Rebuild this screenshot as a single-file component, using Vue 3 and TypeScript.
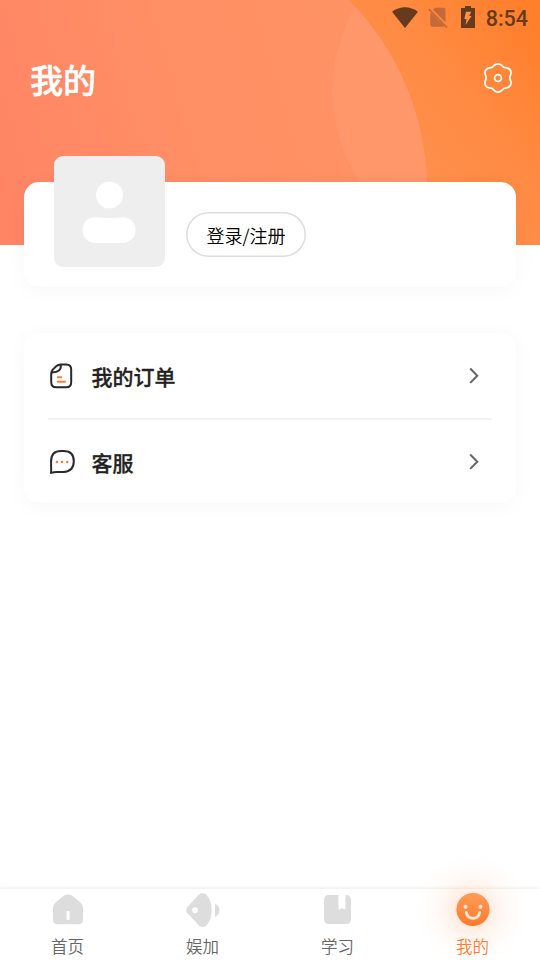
<script setup lang="ts">
interface Entry {
  id: string
  label: string
}

const entries: Entry[] = [
  { id: 'orders', label: '我的订单' },
  { id: 'service', label: '客服' },
]

const tabs: Entry[] = [
  { id: 'home', label: '首页' },
  { id: 'play', label: '娱加' },
  { id: 'study', label: '学习' },
  { id: 'mine', label: '我的' },
]

const active = 'mine'
</script>

<template>
  <div class="screen">
    <header class="hero">
      <svg class="hero-art" width="540" height="245" viewBox="0 0 540 245">
        <defs>
          <linearGradient id="base" gradientUnits="userSpaceOnUse" x1="540" y1="30" x2="390" y2="150">
            <stop offset="0" stop-color="#ff7f2b" />
            <stop offset="0.5" stop-color="#ff8a42" />
            <stop offset="1" stop-color="#ff904e" />
          </linearGradient>
          <linearGradient id="disc" gradientUnits="userSpaceOnUse" x1="0" y1="190" x2="400" y2="70">
            <stop offset="0" stop-color="#ff8565" />
            <stop offset="0.5" stop-color="#ff8f65" />
            <stop offset="1" stop-color="#ff9363" />
          </linearGradient>
          <linearGradient id="veil" gradientUnits="userSpaceOnUse" x1="333" y1="0" x2="430" y2="0">
            <stop offset="0" stop-color="#fff" stop-opacity="0.05" />
            <stop offset="1" stop-color="#fff" stop-opacity="0.04" />
          </linearGradient>
          <clipPath id="lens"><circle cx="157.6" cy="190" r="269.500" /></clipPath>
        </defs>
        <rect width="540" height="245" fill="url(#base)" />
        <circle cx="157.6" cy="190" r="269.500" fill="url(#disc)" />
        <circle cx="498.5" cy="91" r="166" fill="url(#veil)" clip-path="url(#lens)" />
      </svg>
      <div class="status">
        <svg class="wifi" width="26" height="21" viewBox="0 0 26 21">
          <path d="M0 4.7C7.5-1.3 18.500-1.300 26 4.700L13 21Z" fill="#663a1c" />
        </svg>
        <svg class="sim" width="20" height="21" viewBox="0 0 20 21">
          <path d="M7 .8H15.500Q17.500.8 17.500 2.800V15.200L5.100 2.700ZM2.300 5.200L16.800 19.600Q16.400 19.800 15.500 19.800H4.300Q2.300 19.800 2.300 17.800Z" fill="#c3693a" />
          <path d="M.7 2L19 20.500" stroke="#c3693a" stroke-width="1.700" />
        </svg>
        <svg class="battery" width="14" height="22" viewBox="0 0 14 22">
          <path d="M4 0H10V2H14V22H0V2H4Z" fill="#663a1c" />
          <path d="M5 5.800H10.300L8.200 10H10.600L4.500 19L5.600 13H3.300Z" fill="#ff9150" />
        </svg>
        <span class="clock">8:54</span>
      </div>
      <div class="title-row">
        <h1>我的</h1>
        <svg width="30" height="32" viewBox="0 0 30 32" fill="none" stroke="#fff" stroke-width="1.700">
          <path d="M11.100 3.500Q15 .1 18.900 3.500Q20.500 6 23.500 5.800Q28.700 7 27.900 12.100Q25.700 16 27.900 19.200Q28.800 24.700 23.600 26Q20.500 25.700 18.900 28.400Q15 31.700 11.100 28.400Q9.500 25.700 6.400 26Q1.200 24.700 2.100 19.200Q4.300 16 2.100 12.100Q1.300 7 6.500 5.800Q9.500 6 11.100 3.500Z" stroke-linejoin="round" />
          <circle cx="15" cy="16" r="3.400" />
        </svg>
      </div>
    </header>

    <section class="card profile">
      <div class="avatar">
        <svg width="111" height="111" viewBox="0 0 111 111" fill="#fff">
          <rect x="42" y="25.700" width="27" height="26.600" rx="13.300" />
          <path d="M41 61.300Q55 62.800 69 61.300C76 61.300 81.500 66.500 81.500 74S76 87 68.500 87H41.500C34 87 28.500 81.500 28.500 74S34 61.300 41 61.300Z" />
        </svg>
      </div>
      <button class="login" type="button">登录/注册</button>
    </section>

    <section class="card menu">
      <div v-for="item in entries" :key="item.id" class="row">
        <svg v-if="item.id === 'orders'" width="28" height="28" viewBox="0 0 28 28" fill="none" stroke-linecap="round" stroke-linejoin="round">
          <path d="M12.500 2.500H18.200Q23.200 2.500 23.200 7.500V20.300Q23.200 25.300 18.200 25.300H8.200Q3.200 25.300 3.200 20.300V11.500Q3.200 9.300 5 7.400L8.200 4.300Q10.200 2.500 12.500 2.500ZM12.800 2.800Q13.500 10.500 4 10.400" stroke="#292929" stroke-width="2" />
          <path d="M9.800 15.200H13.200M9.800 19.700H17" stroke="#ff7d31" stroke-width="2" />
        </svg>
        <svg v-else width="28" height="28" viewBox="0 0 28 28" fill="none">
          <path d="M3 24.900Q3.300 22 3.100 19V13.300Q3.100 3 13 3H15.500Q25.800 3 25.800 13.200T15.500 23.900H9.500Q5.500 24.100 3 24.900Z" stroke="#292929" stroke-width="2" stroke-linejoin="round" />
          <g fill="#ff7d31"><circle cx="8.900" cy="14" r="1.300" /><circle cx="14" cy="14" r="1.300" /><circle cx="19.200" cy="14" r="1.300" /></g>
        </svg>
        <span class="row-label">{{ item.label }}</span>
        <svg class="chevron" width="12" height="18" viewBox="0 0 12 18" fill="none" stroke="#666" stroke-width="2">
          <path d="M2.200 1.500L9.300 8.700L2.200 15.900" />
        </svg>
      </div>
    </section>

    <nav class="tabs">
      <div v-for="tab in tabs" :key="tab.id" class="tab" :class="{ active: tab.id === active }">
        <svg v-if="tab.id === 'home'" width="36" height="36" viewBox="0 0 36 36">
          <path d="M14 2.600Q18 .2 22 2.600L30.500 9.400Q33 11.500 33 15V26.500Q33 31.200 28.500 31.200H7.500Q3 31.200 3 26.500V15Q3 11.500 5.500 9.400Z" fill="#ddd" />
          <rect x="16.600" y="17.900" width="3" height="9" rx="1" fill="#fff" />
        </svg>
        <svg v-else-if="tab.id === 'play'" width="36" height="36" viewBox="0 0 36 36" fill="#ddd">
          <path d="M14.200 1.300Q17.500-.8 21 1.400Q26.700 7 26.700 17.200T20.900 33Q17.700 35 14.300 32.700L2.200 20Q.2 17.200 2.200 14.300Z" />
          <circle cx="10" cy="17.200" r="3" fill="#fff" />
          <path d="M30 10.400Q34.500 13 34.500 17.200T30 24.200Z" />
        </svg>
        <svg v-else-if="tab.id === 'study'" width="36" height="36" viewBox="0 0 36 36">
          <path d="M9 2H18.400V15.600Q18.400 17 20 16.200L21.900 15.200L24 16.200Q25.400 16.900 25.400 15.500V2Q31 2 31 7V26Q31 31 26 31H9Q4 31 4 26V7Q4 2 9 2Z" fill="#ddd" />
        </svg>
        <svg v-else width="36" height="36" viewBox="0 0 36 36">
          <defs>
            <linearGradient id="smile" x1="0" y1="0" x2="0" y2="1">
              <stop offset="0" stop-color="#ff9c57" /><stop offset="1" stop-color="#ff7a2c" />
            </linearGradient>
          </defs>
          <circle cx="18" cy="16.500" r="16.600" fill="url(#smile)" />
          <g fill="#ffeadd"><circle cx="10.500" cy="13.800" r="2" /><circle cx="25.400" cy="13.800" r="2" /></g>
          <path d="M11.200 19.300Q12.500 25.300 18 25.300T24.800 19.300" fill="none" stroke="#ffeadd" stroke-width="2.800" stroke-linecap="round" />
        </svg>
        <span>{{ tab.label }}</span>
      </div>
    </nav>
  </div>
</template>

<style>
body {
  background: #fff;
}
</style>

<style scoped>
.screen {
  display: flex;
  flex-direction: column;
  width: 540px;
  height: 960px;
  overflow: hidden;
  background: #fff;
  font-family: "Noto Sans CJK SC", sans-serif;
}
.hero {
  position: relative;
  flex: none;
  height: 245px;
}
.hero-art {
  position: absolute;
  inset: 0;
}
.status {
  position: relative;
  display: flex;
  align-items: flex-start;
  height: 36px;
  padding: 6px 12px 0 0;
  box-sizing: border-box;
  justify-content: flex-end;
}
.wifi {
  margin: 1px 9.500px 0 0;
}
.sim {
  margin: 1px 13px 0 0;
}
.battery {
  margin-right: 11px;
}
.clock {
  color: #663a1c;
  font: 500 21.500px/25px Roboto, sans-serif;
}
.title-row {
  position: relative;
  display: flex;
  align-items: center;
  justify-content: space-between;
  height: 84px;
  padding: 0 27px 0 30px;
}
h1 {
  margin: 2px 0 0;
  color: #fff;
  font-size: 33px;
  font-weight: 500;
  line-height: 48px;
  -webkit-text-stroke: 0.500px #fff;
}
.card {
  position: relative;
  flex: none;
  margin: 0 24px;
  border-radius: 15px;
  background: #fff;
  box-shadow: 0 3px 24px rgba(0, 0, 0, 0.035);
}
.profile {
  display: flex;
  align-items: flex-start;
  gap: 21px;
  height: 105px;
  margin-top: -63.500px;
  padding-left: 30px;
}
.avatar {
  width: 111px;
  height: 111px;
  margin-top: -25.500px;
  border-radius: 9px;
  background: #eee;
}
.avatar svg {
  display: block;
}
.login {
  width: 120px;
  height: 45px;
  margin-top: 30px;
  padding: 1px 0 0;
  border: 0;
  border-radius: 23px;
  background: #fff;
  box-shadow: inset 0 0 0 1.500px #ddd;
  color: #000;
  font-family: inherit;
  font-size: 18px;
  font-weight: 350;
}
.menu {
  margin-top: 46.500px;
  padding: 0 24px;
}
.row {
  display: flex;
  align-items: center;
  height: 85px;
  box-sizing: border-box;
  padding-top: 1.500px;
}
.row:first-child {
  height: 84.500px;
}
.row + .row {
  height: 85px;
  border-top: 2px solid #f2f2f2;
}
.row-label {
  margin-left: 15.500px;
  color: #222;
  font-size: 21px;
  font-weight: 500;
  -webkit-text-stroke: 0.300px #222;
}
.chevron {
  margin: 0 12px 0 auto;
}
.tabs {
  display: grid;
  grid-template-columns: repeat(4, 1fr);
  flex: none;
  height: 71px;
  margin-top: auto;
  box-shadow: 0 -1px 3px rgba(0, 0, 0, 0.08);
}
.tab {
  position: relative;
  display: flex;
  flex-direction: column;
  align-items: center;
  padding-top: 4px;
  color: #666;
  font-size: 16.500px;
  font-weight: 350;
  line-height: 24px;
}
.tab svg {
  position: relative;
}
.tab span {
  position: relative;
  margin-top: 5px;
}
.active {
  color: #ff7d31;
}
.active::before {
  content: "";
  position: absolute;
  top: -37px;
  left: 9px;
  width: 116px;
  height: 116px;
  border-radius: 50%;
  background: radial-gradient(closest-side, rgba(255, 125, 49, 0.17) 25%, rgba(255, 125, 49, 0.09) 42%, rgba(255, 125, 49, 0.038) 62%, rgba(255, 125, 49, 0.01) 82%, transparent 100%);
}
</style>
